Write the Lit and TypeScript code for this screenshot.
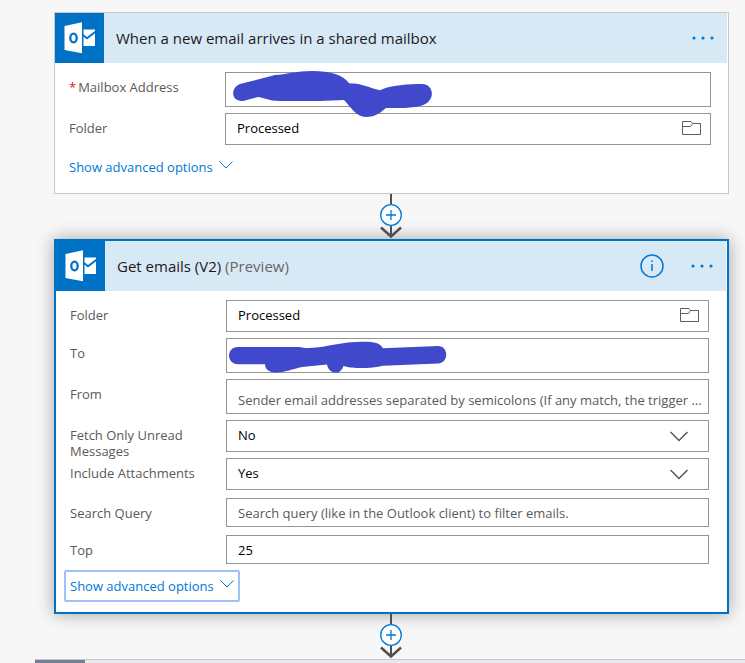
import { LitElement, html, css, svg, nothing } from "lit";
import { customElement, property } from "lit/decorators.js";

const base = css`
  * { box-sizing: border-box; }
  button, input, select { font: inherit; margin: 0; border-radius: 0; }
  button { padding: 0; border: 0; background: none; cursor: pointer; }
  svg { display: block; }
`;

type Kind = "email" | "picker" | "choice" | "text";

interface Field {
  id: string;
  label: string;
  kind: Kind;
  value?: string;
  placeholder?: string;
  required?: boolean;
  scribble?: string;
}

const triggerFields: Field[] = [
  {
    id: "mailbox", label: "Mailbox Address", kind: "email", required: true,
    scribble: "M14 12 L49 3 C60 2.500 70 -1 86 -1 C104 -1 118 3 123 11.300 C137 11.500 143 16 154 18.300 C164 13 184 12 196 12 C209 12 210 31 194 34 C182 37 170 35.500 160 36 C153 42 148 45 140 45 C130 45 124 34 118 28 L94 29 H54 C43 29 36 25 32 25 L17 29 C5 30 4 16 14 12 Z",
  },
  { id: "folder", label: "Folder", kind: "picker", value: "Processed" },
];

const actionFields: Field[] = [
  { id: "folder", label: "Folder", kind: "picker", value: "Processed" },
  {
    id: "to", label: "To", kind: "email",
    scribble: "M11 9 H70 C76 9 76 10.500 82 10 C102 9 114 3.700 136 3.700 C148 3.700 153 5 156 10.300 L211 8 C222 8 222 25 211 25.500 L156 27.700 C150 29.500 142 30 133 30 C124 30 120 29 116.500 28 C114 37 102 37 100 26.500 L75 29 C66 31 58 34.500 48 34.500 C42 34.500 38 31 38 26.300 H11 C-1 26 -1 9 11 9 Z",
  },
  { id: "from", label: "From", kind: "email", placeholder: "Sender email addresses separated by semicolons (If any match, the trigger will run)." },
  { id: "unread", label: "Fetch Only Unread Messages", kind: "choice", value: "No" },
  { id: "attachments", label: "Include Attachments", kind: "choice", value: "Yes" },
  { id: "query", label: "Search Query", kind: "text", placeholder: "Search query (like in the Outlook client) to filter emails." },
  { id: "top", label: "Top", kind: "text", value: "25" },
];

const outlookLogo = svg`
  <svg width="49" height="50" viewBox="0 0 49 50" aria-hidden="true">
    <path fill="#fff" d="M9.500 13 L27 9.300 V40.300 L9.500 37 Z"/>
    <ellipse cx="18.500" cy="25" rx="3.200" ry="4.400" fill="none" stroke="#0072c6" stroke-width="2.300"/>
    <path fill="#fff" d="M28.500 16.500 H40 V33 H28.500 Z"/>
    <path fill="none" stroke="#0072c6" stroke-width="2" d="M27.500 21.800 L32 25.300 L40.500 18.800"/>
  </svg>`;

const folderIcon = svg`
  <svg width="19" height="15" viewBox="0 0 19 15" fill="none" stroke="#5f5f5f" aria-hidden="true">
    <path d="M.500 .500 H9 L10.500 2.500 H18.500 V13.500 H.500 Z M.500 5.500 H8.500 L10.500 2.500"/>
  </svg>`;

@customElement("flow-field")
export class FlowField extends LitElement {
  @property({ attribute: false }) field!: Field;

  static styles = [base, css`
    :host { display: block; }
    .row { display: grid; grid-template-columns: 156px minmax(0, 1fr); align-items: start; }
    .row.text { margin-top: 2px; }
    label { padding: 7px 16px 0 0; margin-bottom: -8px; line-height: 16px; color: #5a5a5a; }
    .required { color: #e81123; margin-right: 2px; }
    .box { position: relative; display: flex; height: 32px; border: 1px solid #949494; }
    .email .box { height: 35px; }
    .text .box { height: 29px; }
    .control {
      flex: 1; min-width: 0; padding: 0 0 2px 11px; border: 0; outline: 0;
      background: none; color: #000; text-overflow: ellipsis; appearance: none;
    }
    .email .control { padding-top: 6px; padding-bottom: 0; }
    .text .control { padding-bottom: 0; }
    .control::placeholder { color: #5a5a5a; opacity: 1; }
    .browse { width: 38px; padding-bottom: 2px; display: grid; place-items: center; }
    .chevron { position: absolute; right: 20px; top: 10px; pointer-events: none; }
    .scribble { position: absolute; z-index: 1; left: 0; top: -1px; overflow: visible; pointer-events: none; }
  `];

  private control(f: Field) {
    if (f.kind === "choice") {
      return html`
        <select class="control" id=${f.id}>
          <option ?selected=${f.value === "Yes"}>Yes</option>
          <option ?selected=${f.value === "No"}>No</option>
        </select>
        <svg class="chevron" width="18" height="11" viewBox="0 0 18 11" fill="none" stroke="#555" stroke-width="1.500">
          <path d="M.500 1 L9 9.500 L17.500 1"/>
        </svg>`;
    }
    return html`
      <input class="control" id=${f.id} type="text" .value=${f.value ?? ""} placeholder=${f.placeholder ?? ""}>
      ${f.kind === "picker" ? html`<button class="browse" aria-label="Browse folders">${folderIcon}</button>` : nothing}`;
  }

  render() {
    const f = this.field;
    return html`
      <div class="row ${f.kind}">
        <label for=${f.id}>${f.required ? html`<span class="required">*</span>` : nothing}${f.label}</label>
        <div class="box">
          ${this.control(f)}
          ${f.scribble ? html`<svg class="scribble" width="222" height="46" viewBox="0 0 222 46"><path fill="#4048cc" d=${f.scribble}/></svg>` : nothing}
        </div>
      </div>`;
  }
}

@customElement("flow-card")
export class FlowCard extends LitElement {
  @property() heading = "";
  @property() note = "";
  @property({ type: Boolean }) selected = false;
  @property({ attribute: false }) fields: Field[] = [];

  static styles = [base, css`
    :host { display: block; }
    .card { border: 1px solid #c8c8c8; background: #fff; }
    .card.selected { border: 2px solid #0072c6; box-shadow: 0 0 16px rgba(0, 0, 0, 0.35); }
    .header { display: flex; align-items: center; height: 50px; margin-right: 1px; padding-right: 11px; background: #d8e9f6; }
    .logo { background: #0072c6; }
    .title { flex: 1; margin: 0 12px; font-size: 15px; font-weight: inherit; line-height: 20px; color: #1a1a1a; white-space: nowrap; }
    .note { color: #666; }
    .info { margin-right: 25px; }
    .body { display: grid; gap: 6px; padding: 9px 17px 10px 14px; }
    .selected .body { padding-right: 18px; }
    .more {
      justify-self: start; display: flex; align-items: center; gap: 6px;
      height: 32px; margin-left: -6px; padding: 0 4px; border: 2px solid transparent;
      border-radius: 2px; color: #0078d7; white-space: nowrap;
    }
    .selected .more { border-color: #a0c0fb; }
    .arrow { margin-bottom: 4px; }
  `];

  render() {
    return html`
      <section class="card ${this.selected ? "selected" : ""}">
        <header class="header">
          <div class="logo">${outlookLogo}</div>
          <h2 class="title">${this.heading} ${this.note ? html`<span class="note">${this.note}</span>` : nothing}</h2>
          ${this.selected ? html`
            <button class="info" aria-label="Information">
              <svg width="24" height="24" viewBox="0 0 24 24">
                <circle cx="12" cy="12" r="11" fill="none" stroke="#0078d7" stroke-width="1.500"/>
                <path d="M12 10 V17 M12 6.500 V8" stroke="#0078d7" stroke-width="1.500"/>
              </svg>
            </button>` : nothing}
          <button class="menu" aria-label="Menu">
            <svg width="26" height="10" viewBox="0 0 26 10" fill="#0078d7">
              <circle cx="4" cy="5" r="1.600"/><circle cx="13" cy="5" r="1.600"/><circle cx="22" cy="5" r="1.600"/>
            </svg>
          </button>
        </header>
        <div class="body">
          ${this.fields.map((f) => html`<flow-field .field=${f}></flow-field>`)}
          <button class="more">
            Show advanced options
            <svg class="arrow" width="14" height="8" viewBox="0 0 14 8" fill="none" stroke="#0078d7">
              <path d="M.500 .500 L7 7 L13.500 .500"/>
            </svg>
          </button>
        </div>
      </section>`;
  }
}

@customElement("flow-connector")
export class FlowConnector extends LitElement {
  static styles = [base, css`
    :host { position: relative; display: flex; flex-direction: column; align-items: center; padding-right: 1px; }
    .line { width: 2px; height: 10px; background: #505050; }
  `];

  render() {
    return html`
      <div class="line"></div>
      <button aria-label="Insert a new step">
        <svg width="22" height="22" viewBox="0 0 22 22" stroke="#0078d7">
          <circle cx="11" cy="11" r="10.300" fill="#fff" stroke-width="1.300"/>
          <path d="M11 6 V16 M6 11 H16" stroke-width="1.300"/>
        </svg>
      </button>
      <svg width="22" height="13" viewBox="0 0 22 13" fill="none" stroke="#505050">
        <path d="M11 0 V11" stroke-width="2"/>
        <path d="M1 1.500 L11 10.500 L21 1.500" stroke-width="2.500"/>
      </svg>`;
  }
}

@customElement("app-root")
export class AppRoot extends LitElement {
  static styles = [base, css`
    :host {
      display: block; box-sizing: border-box; height: 100vh; overflow: hidden;
      padding: 12px 16px 0 54px; background: #f7f7f7;
      font-family: "Open Sans", "Noto Sans", sans-serif; font-size: 13px; font-weight: 384;
    }
    .next { display: flex; height: 52px; margin: 0 -16px 0 -19px; border-top: 1px solid #c8c8c8; background: #e9e9ed; }
    .swatch { width: 50px; background: #738093; }
  `];

  render() {
    return html`
      <flow-card heading="When a new email arrives in a shared mailbox" .fields=${triggerFields}></flow-card>
      <flow-connector></flow-connector>
      <flow-card heading="Get emails (V2)" note="(Preview)" selected .fields=${actionFields}></flow-card>
      <flow-connector></flow-connector>
      <div class="next"><div class="swatch"></div></div>`;
  }
}
